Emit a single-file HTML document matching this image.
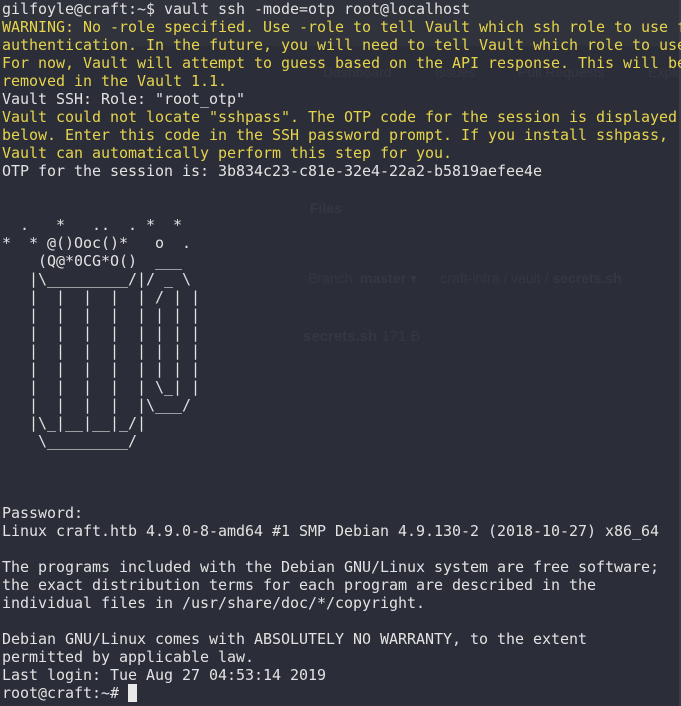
<!DOCTYPE html>
<html><head><meta charset="utf-8"><style>
html,body{margin:0;padding:0;background:#2b2d38;width:681px;height:706px;overflow:hidden;position:relative}
.bg{position:absolute;font-family:"Liberation Sans",sans-serif;color:#353743}
pre{position:absolute;left:2px;top:0;margin:0;font-family:"DejaVu Sans Mono","Liberation Mono",monospace;font-size:15px;line-height:18px;color:#e2e2e2;white-space:pre;letter-spacing:-0.03px}
.y{color:#e6d44c}
.cur{background:#e8e8e8;color:#e8e8e8}
</style></head><body>
<div style="position:absolute;left:0;top:0;width:681px;height:46px;background:#30323c"></div>
<div style="position:absolute;left:679px;top:0;width:2px;height:706px;background:#3a3c46"></div>
<div class="bg" style="left:323px;top:64px;font-size:14px">Dashboard</div>
<div class="bg" style="left:435px;top:64px;font-size:14px">Issues</div>
<div class="bg" style="left:518px;top:64px;font-size:14px">Pull Requests</div>
<div class="bg" style="left:648px;top:64px;font-size:14px">Explo</div>
<div class="bg" style="left:310px;top:200px;font-size:14px;font-weight:bold">Files</div>
<div class="bg" style="left:308px;top:270px;font-size:14px">Branch: <b>master</b> ▾ &nbsp;&nbsp;&nbsp;&nbsp; craft-infra / vault / <b>secrets.sh</b></div>
<div class="bg" style="left:303px;top:328px;font-size:15px"><b>secrets.sh</b> 171 B</div>
<pre><span>gilfoyle@craft:~$ vault ssh -mode=otp root@localhost</span>
<span class="y">WARNING: No -role specified. Use -role to tell Vault which ssh role to use f
authentication. In the future, you will need to tell Vault which role to use
For now, Vault will attempt to guess based on the API response. This will be
removed in the Vault 1.1.</span>
Vault SSH: Role: "root_otp"
<span class="y">Vault could not locate "sshpass". The OTP code for the session is displayed
below. Enter this code in the SSH password prompt. If you install sshpass,
Vault can automatically perform this step for you.</span>
OTP for the session is: 3b834c23-c81e-32e4-22a2-b5819aefee4e


  .   *   ..  . *  *
*  * @()Ooc()*   o  .
    (Q@*0CG*O()  ___
   |\_________/|/ _ \
   |  |  |  |  | / | |
   |  |  |  |  | | | |
   |  |  |  |  | | | |
   |  |  |  |  | | | |
   |  |  |  |  | | | |
   |  |  |  |  | \_| |
   |  |  |  |  |\___/
   |\_|__|__|_/|
    \_________/



Password:
Linux craft.htb 4.9.0-8-amd64 #1 SMP Debian 4.9.130-2 (2018-10-27) x86_64

The programs included with the Debian GNU/Linux system are free software;
the exact distribution terms for each program are described in the
individual files in /usr/share/doc/*/copyright.

Debian GNU/Linux comes with ABSOLUTELY NO WARRANTY, to the extent
permitted by applicable law.
Last login: Tue Aug 27 04:53:14 2019
root@craft:~# <span class="cur">_</span></pre>
</body></html>
